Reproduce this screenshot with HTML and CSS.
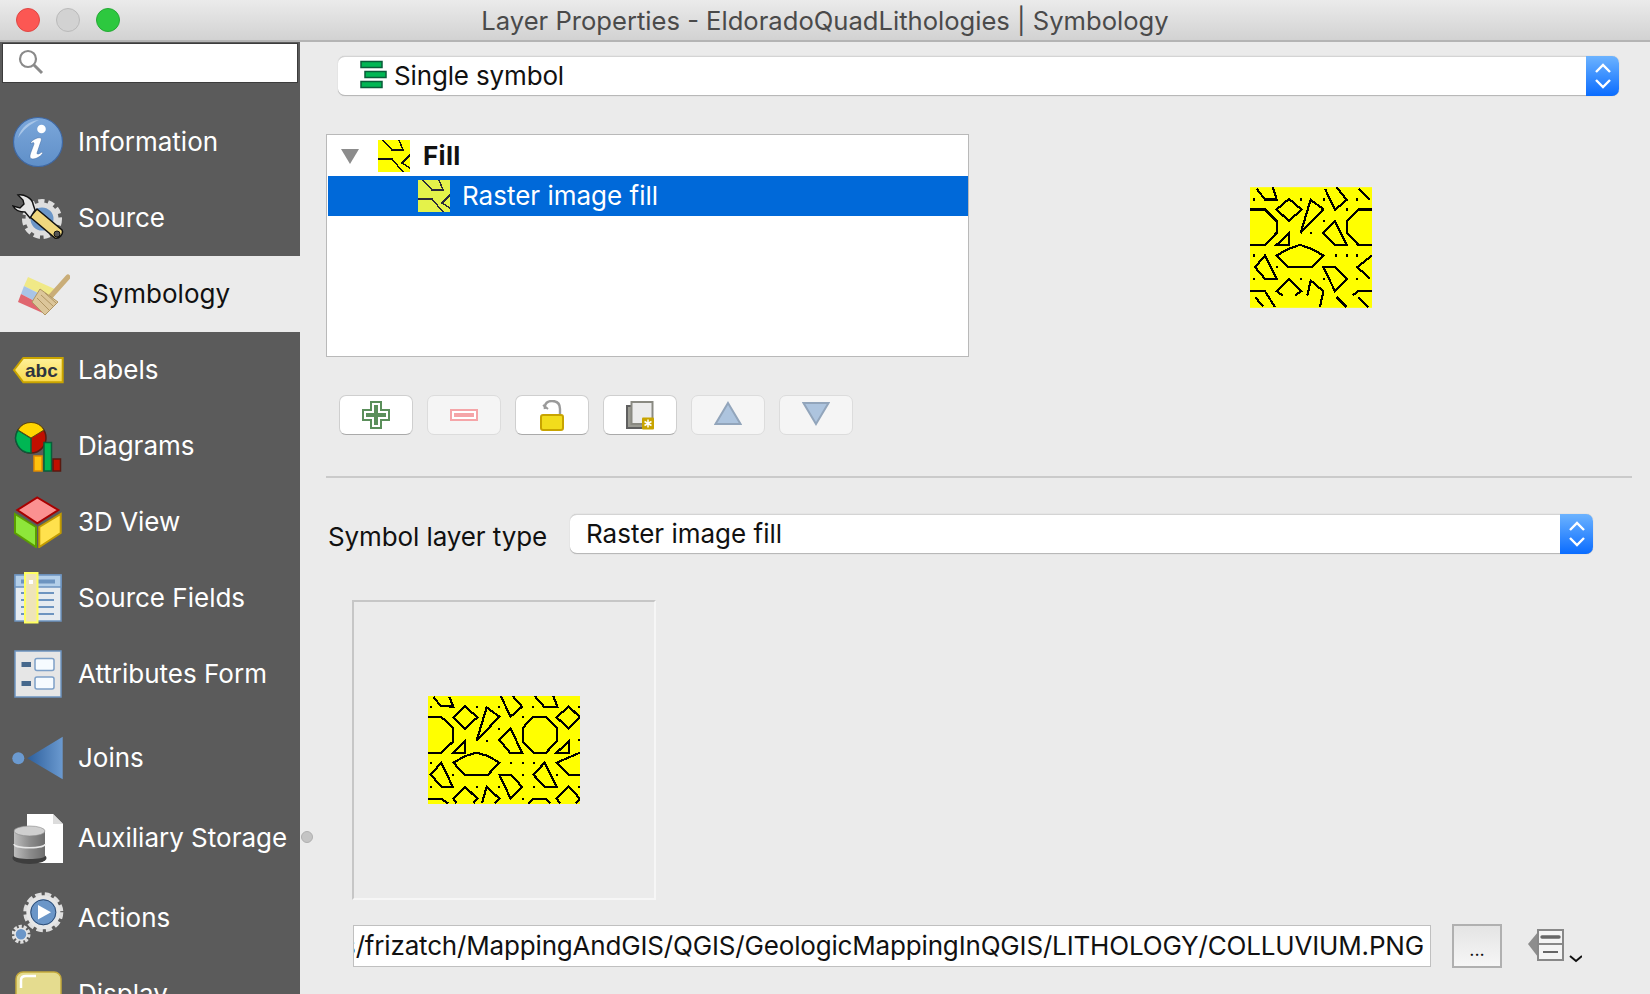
FILE: index.html

```html
<!DOCTYPE html>
<html lang="en">
<head>
    <meta charset="UTF-8">
    <title>Layer Properties - EldoradoQuadLithologies | Symbology</title>
    <link rel="stylesheet" href="styles.css">
</head>
<body>
    <div class="titlebar">
        <div class="lights">
            <span class="light red"></span>
            <span class="light grey"></span>
            <span class="light green"></span>
        </div>
        <div class="title">Layer Properties - EldoradoQuadLithologies | Symbology</div>
    </div>

    <div class="window">
        <div class="sidebar">
            <div class="search">
                <svg width="28" height="28" viewBox="0 0 28 28"><circle cx="11" cy="11" r="8" fill="none" stroke="#8a8a8a" stroke-width="2.2"/><path d="M17 17l8 8" stroke="#8a8a8a" stroke-width="3"/></svg>
            </div>

            <div class="item">
                <svg class="icon" viewBox="0 0 52 52">
                    <defs><linearGradient id="ig" x1="0" y1="0" x2="0" y2="1"><stop offset="0" stop-color="#7ba7da"/><stop offset="1" stop-color="#5f8fc8"/></linearGradient></defs>
                    <circle cx="26" cy="26" r="24.5" fill="url(#ig)" stroke="#3f68a3" stroke-width="1.2"/>
                    <path d="M6 22C9 11 17 5 27 4C18 8 11 14 6 22z" fill="#a8c6e8"/>
                    <circle cx="29.5" cy="13" r="4.3" fill="#fff"/>
                    <path d="M19 26c3-3 7-5 10-4c1 1 0 3-1 6l-3 9c0 2 2 1 5-1l1 1c-3 4-7 6-11 6c-3-1-2-4-1-7l3-8c0-2-1-2-3 0z" fill="#fff" stroke="#3f68a3" stroke-width=".5"/>
                </svg>
                <span>Information</span>
            </div>

            <div class="item">
                <svg class="icon" viewBox="0 0 52 52">
                    <circle cx="30" cy="27" r="17" fill="none" stroke="#dedede" stroke-width="6" stroke-dasharray="6 3.500"/>
                    <circle cx="30" cy="27" r="14" fill="#6b96c8" stroke="#dedede" stroke-width="5"/>
                    <path d="M25 17L50 38C52 42 47 47 43 46L18 25z" fill="#f0d77e" stroke="#111" stroke-width="1.500"/>
                    <path d="M6 3C12 2 20 6 21 12L23 18L18 26L13 20C8 20 3 18 1 14L8 16L12 12L11 8z" fill="#e6e6e6" stroke="#111" stroke-width="1.400"/>
                    <circle cx="45" cy="42" r="3" fill="#555" stroke="#111"/>
                </svg>
                <span>Source</span>
            </div>

            <div class="item active">
                <svg class="icon" viewBox="0 0 52 52">
                    <path d="M10 9L39 22L34 32L6 18z" fill="#f0e987"/>
                    <path d="M6 18L34 32L30 40L3 26z" fill="#a8c4e6"/>
                    <path d="M3 26L30 40L27 46L0 34z" fill="#e0666f"/>
                    <path d="M50 9L33 28" stroke="#c9ad78" stroke-width="5" stroke-linecap="round"/>
                    <path d="M22 21L40 34L27 47L14 34z" fill="#dcc69a" stroke="#b09663"/>
                    <path d="M19 30L31 42M23 27L35 38M27 25L38 35" stroke="#b09663"/>
                </svg>
                <span>Symbology</span>
            </div>

            <div class="item">
                <svg class="icon" viewBox="0 0 52 52">
                    <defs><linearGradient id="lg" x1="0" y1="0" x2="0" y2="1"><stop offset="0" stop-color="#fff19a"/><stop offset="1" stop-color="#f9d94a"/></linearGradient></defs>
                    <path d="M2 26L11.300 14H50.700V38.300H11.300z" fill="url(#lg)" stroke="#c9a400" stroke-width="2"/>
                    <text x="13" y="33" class="abc">abc</text>
                </svg>
                <span>Labels</span>
            </div>

            <div class="item">
                <svg class="icon" viewBox="0 0 52 52">
                    <circle cx="19" cy="18" r="15" fill="#c00f00" stroke="#5a1a10" stroke-width="1.500"/>
                    <path d="M19 18L6 10A15 15 0 0 0 19 33z" fill="#00b653" stroke="#0a5c3a" stroke-width="1.500"/>
                    <path d="M19 18L6 10A15 15 0 0 1 32 10z" fill="#ffd500" stroke="#5a4a10" stroke-width="1"/>
                    <rect x="22" y="36" width="8" height="15" fill="#ffc20e" stroke="#e08a00" stroke-width="1.500"/>
                    <rect x="32" y="22.500" width="7.500" height="28.500" fill="#00b653" stroke="#0a5c3a" stroke-width="1.500"/>
                    <rect x="41" y="39" width="7.500" height="12" fill="#c00f00" stroke="#5a1a10" stroke-width="1.500"/>
                </svg>
                <span>Diagrams</span>
            </div>

            <div class="item">
                <svg class="icon" viewBox="0 0 52 52">
                    <path d="M25.300 1.500L46.300 14L25.300 27.300L5.300 14z" fill="#fb9191" stroke="#a80000" stroke-width="2"/>
                    <path d="M3 18L24 31V51L3 37z" fill="#8ee63a" stroke="#5a9e00" stroke-width="2"/>
                    <path d="M27.300 31L48.700 18V37L27.300 51z" fill="#ffe14d" stroke="#c29b00" stroke-width="2"/>
                </svg>
                <span>3D View</span>
            </div>

            <div class="item">
                <svg class="icon" viewBox="0 0 52 52">
                    <rect x="3" y="3" width="46" height="46" fill="#e6ebf0" stroke="#6d94c0" stroke-width="1.500"/>
                    <rect x="3" y="3" width="46" height="12" fill="#b4cfe9" stroke="#6d94c0" stroke-width="1.500"/>
                    <path d="M9 9.500H43" stroke="#6d94c0" stroke-width="4"/>
                    <path d="M9 21H42M9 28H42M9 35H42M9 42H42" stroke="#6d94c0" stroke-width="2"/>
                    <rect x="13" y="1" width="12.500" height="49.500" fill="#efe4b8" stroke="#ffff60" stroke-width="2"/>
                    <rect x="17" y="8" width="4" height="4" fill="#fff"/>
                </svg>
                <span>Source Fields</span>
            </div>

            <div class="item">
                <svg class="icon" viewBox="0 0 52 52">
                    <rect x="3" y="3" width="46" height="46" fill="#e6e6e6" stroke="#6d94c0" stroke-width="1.500"/>
                    <rect x="9.500" y="14" width="9.500" height="5" fill="#46688c"/>
                    <rect x="9.500" y="33" width="9.500" height="5" fill="#46688c"/>
                    <rect x="23" y="10.500" width="19" height="12" rx="2" fill="#f6fbff" stroke="#7da0c8" stroke-width="1.500"/>
                    <rect x="23" y="29" width="19" height="12" rx="2" fill="#f6fbff" stroke="#7da0c8" stroke-width="1.500"/>
                </svg>
                <span>Attributes Form</span>
            </div>

            <div class="item tall">
                <svg class="icon" viewBox="0 0 52 52">
                    <defs><linearGradient id="jg" x1="0" y1="0" x2="1" y2="0"><stop offset="0" stop-color="#2d5f9c"/><stop offset="1" stop-color="#6b9ad0"/></linearGradient></defs>
                    <circle cx="6.300" cy="26.300" r="6" fill="#6b9ad0"/>
                    <path d="M50.700 4.700V47.300L15.300 26.300z" fill="url(#jg)"/>
                </svg>
                <span>Joins</span>
            </div>

            <div class="item short">
                <svg class="icon" viewBox="0 0 52 52">
                    <defs><linearGradient id="dbg" x1="0" y1="0" x2="1" y2="0"><stop offset="0" stop-color="#bdbdbd"/><stop offset=".5" stop-color="#8d8d8d"/><stop offset="1" stop-color="#6e6e6e"/></linearGradient></defs>
                    <path d="M15 2H41L51 12V51H15z" fill="#fff"/>
                    <path d="M41 2V12H51z" fill="#dcdcdc"/>
                    <ellipse cx="17.500" cy="46" rx="17" ry="6" fill="#3e3e3e"/>
                    <path d="M2 19V44C2 48 33 48 33 44V19z" fill="url(#dbg)"/>
                    <ellipse cx="17.500" cy="19" rx="15.500" ry="5" fill="#cfcfcf" stroke="#8a8a8a" stroke-width=".6"/>
                    <path d="M2 32C2 37 33 37 33 32" fill="none" stroke="#e8e8e8" stroke-width="1.500"/>
                </svg>
                <span>Auxiliary Storage</span>
            </div>

            <div class="item tall">
                <svg class="icon" viewBox="0 0 52 52">
                    <circle cx="31.300" cy="20.300" r="17" fill="none" stroke="#dedede" stroke-width="6" stroke-dasharray="6 3"/>
                    <circle cx="31.300" cy="20.300" r="15" fill="#6b96c8" stroke="#e6e6e6" stroke-width="4"/>
                    <circle cx="31.300" cy="20.300" r="12.500" fill="#6b96c8" stroke="#1f3a5e" stroke-width=".8"/>
                    <path d="M26 13L39 20.300L26 27.500z" fill="#fff"/>
                    <circle cx="9" cy="42.300" r="7.500" fill="none" stroke="#dedede" stroke-width="4" stroke-dasharray="3 1.700"/>
                    <circle cx="9" cy="42.300" r="6" fill="#6b96c8" stroke="#e6e6e6" stroke-width="1.500"/>
                </svg>
                <span>Actions</span>
            </div>

            <div class="item last">
                <svg class="icon" viewBox="0 0 52 52">
                    <rect x="4" y="4" width="45" height="45" rx="7" fill="#e5dc8f" stroke="#c4a93c" stroke-width="1.500"/>
                    <path d="M9 20V12C9 9 11 8 14 8H24" fill="none" stroke="#fff" stroke-width="2.500"/>
                </svg>
                <span>Display</span>
            </div>
        </div>

        <div class="splitter-dot"></div>

        <div class="main">
            <div class="combo combo-top">
                <svg class="combo-icon" width="28" height="30" viewBox="0 0 28 30">
                    <rect x="1" y="1.500" width="21" height="6" fill="#00b653" stroke="#0a5c3a" stroke-width="1.500"/>
                    <rect x="5" y="11.500" width="21" height="6" fill="#00b653" stroke="#0a5c3a" stroke-width="1.500"/>
                    <rect x="1" y="21.500" width="21" height="6" fill="#00b653" stroke="#0a5c3a" stroke-width="1.500"/>
                </svg>
                <span class="combo-text">Single symbol</span>
                <div class="combo-arrow">
                    <svg width="18" height="28" viewBox="0 0 18 28"><path d="M2 10L9 3L16 10M2 18L9 25L16 18" fill="none" stroke="#fff" stroke-width="2.400"/></svg>
                </div>
            </div>

            <div class="symbol-row">
                <div class="tree">
                    <div class="tree-row">
                        <span class="caret"></span>
                        <svg class="tiny" viewBox="0 0 32 32"><rect width="32" height="32" fill="#ffff00"/><path d="M5 0L14 10H25L21 0M0 19H14L25 32M32 15L24 23L32 28" class="tiny-line"/></svg>
                        <b>Fill</b>
                    </div>
                    <div class="tree-row selected">
                        <svg class="tiny" viewBox="0 0 32 32"><rect width="32" height="32" fill="#e4f24a"/><path d="M5 0L14 10H25L21 0M0 19H14L25 32M32 15L24 23L32 28" class="tiny-line sel"/></svg>
                        <span>Raster image fill</span>
                    </div>
                </div>

                <svg class="preview" width="122" height="121" viewBox="60 50 366 362">
                    <rect x="60" y="50" width="366" height="362" fill="#ffff00"/>
                    <g class="hatch">
                        <path d="M80 55L105 87H140L128 50"/>
                        <path d="M140 117L177 85L214 117L177 152z"/>
                        <path d="M212 187L242 88L280 116z"/>
                        <path d="M60 117H105L140 152V187L105 223H60"/>
                        <path d="M140 223L178 187V223z"/>
                        <path d="M140 255L175 235L210 223L245 235L280 255L245 290H175z"/>
                        <path d="M285 55L315 118L350 88L320 50"/>
                        <path d="M385 55L420 88"/>
                        <path d="M280 187L315 152L350 223H315z"/>
                        <path d="M426 117H385L350 152V187L385 223H426"/>
                        <path d="M75 290L105 255L140 325H105z"/>
                        <path d="M280 290H315L350 325L315 362z"/>
                        <path d="M426 255L382 290L420 325"/>
                        <path d="M60 362H105L135 410M75 380L100 408"/>
                        <path d="M158 375L140 362L177 325L214 362L195 375"/>
                        <path d="M232 375L242 330L280 362L270 410"/>
                        <path d="M320 380L350 410M426 362H385L368 375M385 380L415 410"/>
                        <path d="M69 87h6M211 87h6M279 87h6M379 87h6M279 152h6M349 117h6M241 187h6M69 255h6M139 290h6M314 255h6M349 255h6M379 255h6M69 325h6M211 325h6M279 325h6M379 325h6"/>
                    </g>
                </svg>
            </div>

            <div class="tools">
                <button class="tool">
                    <svg width="28" height="28" viewBox="0 0 28 28"><path d="M9 1H19V9H27V19H19V27H9V19H1V9H9z" fill="#fff" stroke="#5b8f5b" stroke-width="2"/><path d="M12 4H16V12H24V16H16V24H12V16H4V12H12z" fill="#5b8f5b"/></svg>
                </button>
                <button class="tool off">
                    <svg width="28" height="12" viewBox="0 0 28 12"><rect x="1" y="1" width="26" height="10" fill="#fff" stroke="#f5a5a8" stroke-width="2"/><rect x="4" y="4" width="20" height="4" fill="#f5a5a8"/></svg>
                </button>
                <button class="tool">
                    <svg width="24" height="31" viewBox="0 0 24 31"><path d="M5 9C4 3 8 1 12 1C17 1 20 4 20 9V16" fill="none" stroke="#9a9a9a" stroke-width="2.400"/><path d="M3 5L8 9" stroke="#9a9a9a" stroke-width="2"/><rect x="1" y="15" width="22" height="15" rx="2" fill="#f2dc1c" stroke="#c8a400" stroke-width="2"/></svg>
                </button>
                <button class="tool">
                    <svg width="29" height="29" viewBox="0 0 29 29"><rect x="1" y="5" width="21" height="22" fill="#9b9b93" stroke="#5f5f5f" stroke-width="2"/><rect x="5.500" y="1" width="21" height="22" fill="#ececec" stroke="#8a8a82" stroke-width="2"/><rect x="16" y="16.500" width="12" height="12" rx="1" fill="#c8a400"/><path d="M22 18.500V26.500M18.500 20.500L25.500 24.500M25.500 20.500L18.500 24.500" stroke="#fff" stroke-width="1.500"/></svg>
                </button>
                <button class="tool off">
                    <svg class="arrow-icon" width="28" height="25" viewBox="0 0 28 25"><path d="M14 2L26.500 23H1.500z" fill="#adc4de" stroke="#92a5bb" stroke-width="2"/></svg>
                </button>
                <button class="tool off">
                    <svg class="arrow-icon" width="28" height="25" viewBox="0 0 28 25"><path d="M14 23L26.500 2H1.500z" fill="#adc4de" stroke="#92a5bb" stroke-width="2"/></svg>
                </button>
            </div>

            <div class="separator"></div>

            <div class="type-row">
                <label class="type-label">Symbol layer type</label>
                <div class="combo combo-type">
                    <span class="combo-text">Raster image fill</span>
                    <div class="combo-arrow">
                        <svg width="18" height="28" viewBox="0 0 18 28"><path d="M2 10L9 3L16 10M2 18L9 25L16 18" fill="none" stroke="#fff" stroke-width="2.400"/></svg>
                    </div>
                </div>
            </div>

            <div class="image-box">
                <svg width="152" height="108" viewBox="24 34 456 324">
                    <rect x="24" y="34" width="456" height="324" fill="#ffff00"/>
                    <g class="hatch">
                        <path d="M40 36L62 64L100 66L88 36"/>
                        <path d="M100 98L135 65L172 98L135 132z"/>
                        <path d="M170 168L200 68L238 96z"/>
                        <path d="M24 97H64L100 130V170L64 204H24"/>
                        <path d="M100 204L136 168V204z"/>
                        <path d="M100 234L136 214L170 204L204 214L238 234L204 270H134z"/>
                        <path d="M242 34L272 96L306 66L278 34"/>
                        <path d="M344 34L372 66H412L400 34"/>
                        <path d="M238 166L272 132L306 204H270z"/>
                        <path d="M340 96H378L410 130V170L378 204H340L308 170V130z"/>
                        <path d="M410 98L446 65L480 98L446 132z"/>
                        <path d="M410 204L448 168V204z"/>
                        <path d="M480 204L410 234L446 270H480"/>
                        <path d="M32 270L64 234L98 306H64z"/>
                        <path d="M238 270H272L306 306L272 342z"/>
                        <path d="M340 270L374 234L410 306H374z"/>
                        <path d="M24 342H64L84 356"/>
                        <path d="M110 356L100 342L135 306L172 342L160 356"/>
                        <path d="M186 356L200 306L238 342L225 356"/>
                        <path d="M325 356L340 342H378L390 356"/>
                        <path d="M420 356L410 342L446 306L480 342L468 356"/>
                        <path d="M29 66h6M167 66h6M235 66h6M335 66h6M473 66h6M305 96h6M235 132h6M197 168h6M473 166h6M29 234h6M95 270h6M269 234h6M305 234h6M339 234h6M305 270h6M407 270h6M29 306h6M167 306h6M235 306h6M339 306h6M473 306h6M305 342h6"/>
                    </g>
                </svg>
            </div>

            <div class="path-row">
                <div class="path-input"><span>/Users/frizatch/MappingAndGIS/QGIS/GeologicMappingInQGIS/LITHOLOGY/COLLUVIUM.PNG</span></div>
                <button class="browse">...</button>
                <svg class="override" width="54" height="34" viewBox="0 0 54 34">
                    <path d="M0 15L10 3V28z" fill="#8d8d8d"/>
                    <rect x="10" y="1" width="25" height="30" fill="#f4f4f4" stroke="#888" stroke-width="2"/>
                    <path d="M10 15H35" stroke="#888" stroke-width="2"/>
                    <path d="M14 8H31" stroke="#666" stroke-width="3.400" stroke-linecap="round"/>
                    <path d="M15 23H30" stroke="#666" stroke-width="2"/>
                    <path d="M42 27L48 32L54 27" fill="none" stroke="#111" stroke-width="2"/>
                </svg>
            </div>
        </div>
    </div>
</body>
</html>
```

FILE: styles.css

```css
* {
    box-sizing: border-box;
}
html, body {
    height: 100%;
}
body {
    margin: 0;
    height: 994px;
    overflow: hidden;
    background: #ebebeb;
    font-family: Inter, "Noto Sans", sans-serif;
    font-size: 26px;
    color: #111;
}
button {
    font-family: inherit;
}

/* title bar */
.titlebar {
    height: 42px;
    display: flex;
    align-items: center;
    position: relative;
    background: linear-gradient(#ebebeb, #d2d2d2);
    border-bottom: 2px solid #b4b4b4;
}
.lights {
    display: flex;
    gap: 16px;
    padding-left: 16px;
}
.light {
    width: 24px;
    height: 24px;
    border-radius: 50%;
}
.light.red {
    background: #fc5753;
    border: 1px solid #df4744;
}
.light.grey {
    background: #d2d2d2;
    border: 1px solid #bababa;
}
.light.green {
    background: #2dc83f;
    border: 1px solid #25a935;
}
.title {
    position: absolute;
    left: 0;
    right: 0;
    text-align: center;
    font-size: 25.6px;
    color: #4a4a4a;
}

.window {
    display: flex;
    height: 952px;
    position: relative;
}

/* left list */
.sidebar {
    width: 300px;
    flex-shrink: 0;
    background: #5b5b5b;
    overflow: hidden;
    padding-top: 1px;
}
.search {
    height: 40px;
    margin: 0 2px 21px;
    background: #fff;
    border: 1px solid #3c3c3c;
    padding: 4px 0 0 14px;
}
.item {
    height: 76px;
    display: flex;
    align-items: center;
    gap: 14px;
    padding-left: 12px;
    color: #fff;
}
.item span {
    margin-bottom: 2px;
}
.item.active {
    background: #ebebeb;
    color: #111;
    padding-left: 18px;
    gap: 22px;
}
.item.tall {
    height: 92px;
}
.item.short {
    height: 68px;
}
.item.last {
    height: 60px;
}
.icon {
    width: 52px;
    height: 52px;
    flex-shrink: 0;
}
.abc {
    font-family: "Liberation Sans", sans-serif;
    font-weight: bold;
    font-size: 19px;
    fill: #2e3440;
}
.splitter-dot {
    position: absolute;
    left: 301px;
    top: 789px;
    width: 12px;
    height: 12px;
    border-radius: 50%;
    background: #c4c4c4;
    border: 1px solid #b0b0b0;
}

/* right side */
.main {
    flex: 1;
    padding-top: 14px;
}
.combo {
    height: 40px;
    display: flex;
    align-items: center;
    background: #fff;
    border-radius: 7px;
    border-top: 1px solid #d4d4d4;
    border-bottom: 1px solid #b8b8b8;
    box-shadow: 0 0 1px #b0b0b0;
}
.combo-top {
    width: 1281px;
    margin-left: 38px;
    padding-left: 22px;
    letter-spacing: -0.15px;
}
.combo-icon {
    margin-right: 6px;
    margin-top: -3px;
}
.combo-text {
    flex: 1;
    margin-bottom: 2px;
}
.combo-arrow {
    width: 33px;
    height: 40px;
    margin: -1px 0;
    display: flex;
    align-items: center;
    justify-content: center;
    background: linear-gradient(#6cb3ff, #0a6cff);
    border-radius: 0 7px 7px 0;
}

.symbol-row {
    display: flex;
    align-items: flex-start;
    margin-top: 38px;
    margin-left: 26px;
}
.tree {
    width: 643px;
    height: 223px;
    background: #fff;
    border: 1px solid #b9b9b9;
    padding: 1px 0 1px 1px;
}
.tree-row {
    height: 40px;
    display: flex;
    align-items: center;
    padding-left: 13px;
}
.tree-row b, .tree-row span:last-child {
    margin-bottom: 2px;
}
.tree-row b {
    margin-left: 1px;
    letter-spacing: 0.3px;
}
.tree-row.selected {
    background: #0069d9;
    color: #fff;
    padding-left: 90px;
}
.caret {
    width: 0;
    height: 0;
    border-left: 9px solid transparent;
    border-right: 9px solid transparent;
    border-top: 15px solid #8c8c8c;
    margin-right: 19px;
}
.tiny {
    width: 32px;
    height: 32px;
    margin-right: 12px;
}
.tiny-line {
    fill: none;
    stroke: #111;
    stroke-width: 1.500;
    shape-rendering: crispEdges;
}
.tiny-line.sel {
    stroke: #2a2a3a;
}
.preview {
    margin-left: 281px;
    margin-top: 53px;
}
.hatch path {
    fill: none;
    stroke: #000;
    stroke-width: 6.500;
    shape-rendering: crispEdges;
}

.tools {
    display: flex;
    gap: 14px;
    margin-top: 38px;
    margin-left: 39px;
}
.tool {
    width: 74px;
    height: 40px;
    display: flex;
    align-items: center;
    justify-content: center;
    padding: 0;
    background: #fff;
    border: 1px solid #cfcfcf;
    border-bottom-color: #aaa;
    border-radius: 7px;
}
.tool.off {
    background: #f5f5f5;
    border-color: #dcdcdc;
}
.arrow-icon {
    margin-top: -4px;
}
.separator {
    height: 2px;
    width: 1306px;
    margin: 41px 0 0 26px;
    background: #cacaca;
}

.type-row {
    display: flex;
    align-items: center;
    margin-top: 36px;
    margin-left: 28px;
}
.type-label {
    width: 242px;
    padding-top: 4px;
    letter-spacing: -0.1px;
}
.combo-type {
    width: 1023px;
    padding-left: 16px;
}

.image-box {
    width: 304px;
    height: 300px;
    margin: 46px 0 0 52px;
    display: flex;
    align-items: center;
    justify-content: center;
    border: 2px solid;
    border-color: #c6c6c6 #f6f6f6 #f6f6f6 #c6c6c6;
}

.path-row {
    display: flex;
    align-items: center;
    margin-top: 24px;
    margin-left: 53px;
}
.path-input {
    width: 1078px;
    height: 42px;
    display: flex;
    align-items: center;
    justify-content: flex-end;
    overflow: hidden;
    white-space: nowrap;
    background: #fff;
    border: 1px solid #c0c0c0;
    padding-right: 6px;
    letter-spacing: -0.17px;
}
.path-input span {
    flex-shrink: 0;
    margin-bottom: 2px;
}
.browse {
    width: 50px;
    height: 44px;
    margin-left: 21px;
    padding: 6px 0 0;
    font-size: 18px;
    color: #111;
    background: linear-gradient(#e4e4e4, #f6f6f6);
    border: 2px solid #b0b0b0;
}
.override {
    margin-left: 26px;
}
```
